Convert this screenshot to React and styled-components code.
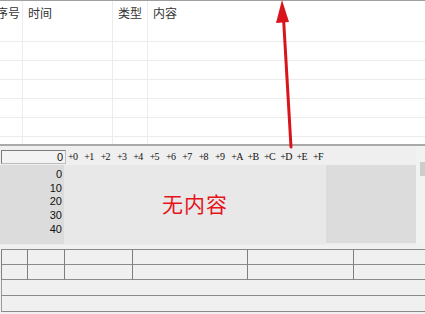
import React from 'react';
import styled, { createGlobalStyle } from 'styled-components';

const Global = createGlobalStyle`
	html, body {
		margin: 0;
		padding: 0;
		background: #f0f0f0;
		overflow: hidden;
	}
	body {
		width: 425px;
		height: 314px;
		font-family: "Noto Sans CJK SC", "Liberation Sans", sans-serif;
	}
`;

const cols = ['序号', '时间', '类型', '内容'];
const hexCols = ['0', '1', '2', '3', '4', '5', '6', '7', '8', '9', 'A', 'B', 'C', 'D', 'E', 'F'];
const offsets = ['0', '10', '20', '30', '40'];
const gridCols = [26, 37, 68, 115, 106, 80];

export default function App() {
	return (
		<>
			<Global />
			<Screen>
				<LogTable>
					<HeadRow>
						{cols.map((c, i) => (
							<HeadCell key={c} $first={i === 0}>
								{c}
							</HeadCell>
						))}
					</HeadRow>
					{[0, 1, 2, 3, 4, 5, 6].map((r) => (
						<Row key={r}>
							{cols.map((c) => (
								<Cell key={c} />
							))}
						</Row>
					))}
				</LogTable>

				<HexPanel>
					<HexMain>
						<HexTop>
							<AddrBox>0</AddrBox>
							<HexLabels>
								{hexCols.map((h) => (
									<span key={h}>+{h}</span>
								))}
							</HexLabels>
						</HexTop>
						<HexBody>
							<OffsetCol>
								{offsets.map((o) => (
									<div key={o}>{o}</div>
								))}
							</OffsetCol>
							<DataArea>无内容</DataArea>
							<AsciiArea />
						</HexBody>
					</HexMain>
					<ScrollBar>
						<Thumb />
					</ScrollBar>
				</HexPanel>

				<Bottom>
					<PropGrid>
						{[0, 1].map((r) =>
							gridCols.map((w, i) => <GridCell key={r + '-' + i} />)
						)}
					</PropGrid>
					<WideRow />
					<WideRow />
				</Bottom>

				<Arrow width="425" height="150" viewBox="0 0 425 150">
					<line x1="291" y1="147" x2="283.5" y2="18" stroke="#d9141b" strokeWidth="3" strokeLinecap="round" />
					<polygon points="276,23 289,22 282,0" fill="#d9141b" />
				</Arrow>
			</Screen>
		</>
	);
}

const Screen = styled.div`
	position: relative;
	width: 425px;
	height: 314px;
	overflow: hidden;
	display: flex;
	flex-direction: column;
	background: #f0f0f0;
`;

const LogTable = styled.div`
	height: 146px;
	box-sizing: border-box;
	background: #fff;
	border-top: 1px solid #a0a0a0;
	border-bottom: 2px solid #a9a9a9;
	overflow: hidden;
`;

const rowGrid = `
	display: grid;
	grid-template-columns: 23px 90px 35px 1fr;
`;

const HeadRow = styled.div`
	${rowGrid}
	height: 22px;
`;

const HeadCell = styled.div`
	border-right: 1px solid #ececec;
	font-size: 12px;
	line-height: 24px;
	color: #333;
	padding-left: ${(p) => (p.$first ? '0' : '5px')};
	text-indent: ${(p) => (p.$first ? '-4px' : '0')};
	white-space: nowrap;
	overflow: hidden;
	&:last-child {
		border-right: none;
	}
`;

const Row = styled.div`
	${rowGrid}
	height: 19px;
	box-sizing: border-box;
	border-bottom: 1px solid #ececec;
`;

const Cell = styled.div`
	border-right: 1px solid #ececec;
	&:last-child {
		border-right: none;
	}
`;

const HexPanel = styled.div`
	height: 99px;
	display: flex;
	background: #ececec;
`;

const HexMain = styled.div`
	flex: 1;
	display: flex;
	flex-direction: column;
`;

const HexTop = styled.div`
	height: 19px;
	display: flex;
	align-items: center;
	background: #efefef;
`;

const AddrBox = styled.div`
	margin-left: 1px;
	margin-top: 2px;
	width: 61px;
	height: 12px;
	border: 1px solid #7a7a7a;
	border-right-color: #bdbdbd;
	border-bottom-color: #bdbdbd;
	background: #f3f3f3;
	font-family: "Liberation Sans", sans-serif;
	font-size: 11px;
	line-height: 13px;
	text-align: right;
	padding-right: 2px;
	color: #111;
`;

const HexLabels = styled.div`
	display: flex;
	margin-left: 2px;
	margin-top: 2px;
	font-family: "Liberation Serif", serif;
	font-size: 10px;
	color: #111;
	span {
		width: 16.33px;
		letter-spacing: -0.7px;
	}
`;

const HexBody = styled.div`
	flex: 1;
	display: flex;
	padding-bottom: 1px;
`;

const OffsetCol = styled.div`
	width: 64px;
	background: #dcdcdc;
	box-sizing: border-box;
	padding: 3px 2px 0 0;
	text-align: right;
	font-family: "Liberation Sans", sans-serif;
	font-size: 11px;
	line-height: 13.7px;
	color: #111;
`;

const DataArea = styled.div`
	width: 262px;
	background: #e8e8e8;
	display: flex;
	align-items: center;
	justify-content: center;
	color: #e5141b;
	font-size: 21px;
	padding: 0 0 4px 0;
	box-sizing: border-box;
	letter-spacing: 1px;
`;

const AsciiArea = styled.div`
	width: 90px;
	background: #dcdcdc;
	margin-bottom: 1px;
`;

const ScrollBar = styled.div`
	width: 9px;
	background: #f2f2f2;
	padding-top: 16px;
	padding-left: 4px;
	box-sizing: border-box;
`;

const Thumb = styled.div`
	height: 14px;
	background: #cdcdcd;
`;

const Bottom = styled.div`
	flex: 1;
	padding: 4px 0 0 1px;
	background: #f0f0f0;
`;

const PropGrid = styled.div`
	display: grid;
	grid-template-columns: ${gridCols.map((w) => w + 'px').join(' ')};
	border-top: 1px solid #8a8a8a;
`;

const GridCell = styled.div`
	height: 14px;
	border-left: 1px solid #7f7f7f;
	border-bottom: 1px solid #8a8a8a;
`;

const WideRow = styled.div`
	height: 15px;
	border-left: 1px solid #9a9a9a;
	border-bottom: 1px solid #8a8a8a;
`;

const Arrow = styled.svg`
	position: absolute;
	left: 0;
	top: 0;
	pointer-events: none;
`;
